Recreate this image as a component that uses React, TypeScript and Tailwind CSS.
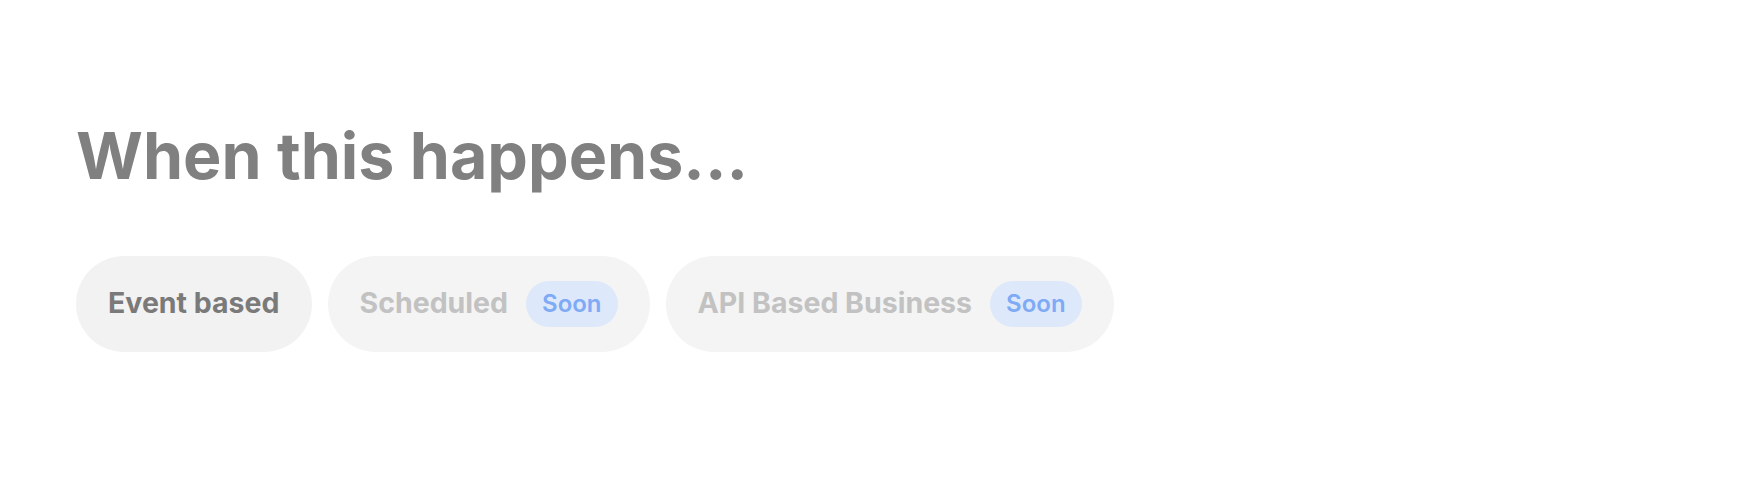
import React from "react";

const Soon = () => (
  <span className="flex h-[46px] items-center rounded-full bg-[#dee8fb] px-4 text-[24px] font-semibold text-[#7eaaf6]">
    Soon
  </span>
);

const App = () => {
  return (
    <div className="min-h-[483px] bg-white pl-[76px] pt-[124px] font-['Inter',sans-serif]">
      <h1 className="text-[64.5px] leading-none font-bold text-[#808080]">When this happens...</h1>

      <div className="mt-[67px] flex gap-4">
        <button className="flex h-[96px] items-center rounded-full bg-[#f2f2f2] px-8 text-[28.5px] font-bold text-[#7a7a7a]">
          Event based
        </button>
        <div className="flex h-[96px] items-center gap-[18px] rounded-full bg-[#f4f4f4] px-8 text-[28.5px] font-bold text-[#c2c2c2]">
          Scheduled
          <Soon />
        </div>
        <div className="flex h-[96px] items-center gap-[18px] rounded-full bg-[#f4f4f4] px-8 text-[28.5px] font-bold text-[#c2c2c2]">
          API Based Business
          <Soon />
        </div>
      </div>
    </div>
  );
};

export default App;
